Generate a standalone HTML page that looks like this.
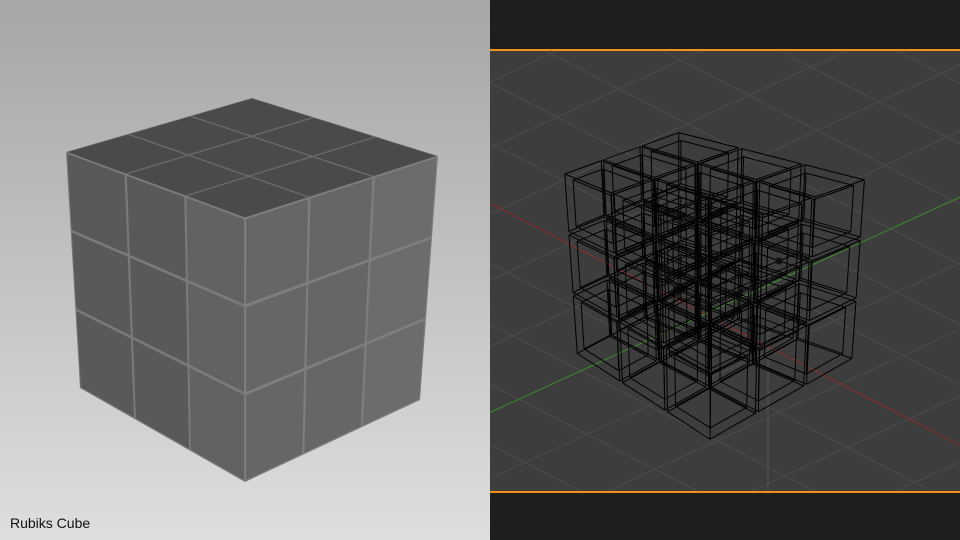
<!DOCTYPE html>
<html><head><meta charset="utf-8"><style>
html,body{margin:0;padding:0;width:960px;height:540px;overflow:hidden;background:#1e1e1e}
#l{position:absolute;left:0;top:0;width:490px;height:540px;overflow:hidden;background:linear-gradient(#a6a6a6,#dedede)}
#r{position:absolute;left:490px;top:0;width:470px;height:540px;overflow:hidden;background:#1e1e1e}
#vp{position:absolute;left:0;top:49px;width:470px;height:444px;background:#3d3d3d}
#ot{position:absolute;left:0;top:49px;width:470px;height:2px;background:#f0901e;z-index:3}
#ob{position:absolute;left:0;top:491px;width:470px;height:2px;background:#f0901e;z-index:3}
#txt{position:absolute;left:10px;top:515px;font:14px "Liberation Sans",sans-serif;color:#111;line-height:16px}
svg{position:absolute;left:0;top:0}
</style></head><body>
<div id="l"><svg id="sl" width="490" height="540"></svg><div id="txt">Rubiks Cube</div></div>
<div id="r"><div id="vp"></div><svg id="sr" width="470" height="540"><defs><clipPath id="cp"><rect x="0" y="51" width="470" height="440"/></clipPath></defs><g id="gr" clip-path="url(#cp)"></g></svg><div id="ot"></div><div id="ob"></div></div>
<script>
function tri(c,u,v,w){
 function bl(a,b,cc,d){return [a[0]*(1-u)*(1-v)+b[0]*u*(1-v)+cc[0]*(1-u)*v+d[0]*u*v, a[1]*(1-u)*(1-v)+b[1]*u*(1-v)+cc[1]*(1-u)*v+d[1]*u*v];}
 var t=bl(c[0],c[1],c[2],c[3]),b=bl(c[4],c[5],c[6],c[7]);return [t[0]*(1-w)+b[0]*w,t[1]*(1-w)+b[1]*w];}
var NS='http://www.w3.org/2000/svg';
function poly(s,pts,fill){var p=document.createElementNS(NS,'polygon');p.setAttribute('points',pts.map(function(q){return q[0].toFixed(1)+','+q[1].toFixed(1)}).join(' '));p.setAttribute('fill',fill);s.appendChild(p);}
function line(s,a,b,col,sw){var p=document.createElementNS(NS,'line');p.setAttribute('x1',a[0]);p.setAttribute('y1',a[1]);p.setAttribute('x2',b[0]);p.setAttribute('y2',b[1]);p.setAttribute('stroke',col);p.setAttribute('stroke-width',sw||1);s.appendChild(p);}
var sl=document.getElementById('sl');
var C=[[252,98],[438,156],[66,152],[245,218],[252,330],[420,400],[80,388],[245,482]];
var g=0.006;
poly(sl,[C[0],C[1],C[3],C[2]],'#6a6a6a');
poly(sl,[C[2],C[3],C[7],C[6]],'#7a7a7a');
poly(sl,[C[3],C[1],C[5],C[7]],'#7e7e7e');
for(var i=0;i<3;i++)for(var j=0;j<3;j++){
 var a=i/3+g,b=(i+1)/3-g,c=j/3+g,d=(j+1)/3-g;
 poly(sl,[tri(C,a,c,0),tri(C,b,c,0),tri(C,b,d,0),tri(C,a,d,0)],'#4a4a4a');
 poly(sl,[tri(C,a,1,c),tri(C,b,1,c),tri(C,b,1,d),tri(C,a,1,d)],i==2?'#626262':'#595959');
 poly(sl,[tri(C,1,a,c),tri(C,1,b,c),tri(C,1,b,d),tri(C,1,a,d)],a<0.1?'#6c6c6c':'#666666');
}
var sr=document.getElementById('gr');
var O=[215,314],rd=[68,35],gd=[-62,28.4];
for(var k=-12;k<=12;k++){
 var o1=[O[0]+gd[0]*k,O[1]+gd[1]*k];line(sr,[o1[0]-rd[0]*12,o1[1]-rd[1]*12],[o1[0]+rd[0]*12,o1[1]+rd[1]*12],'#4c4c4c');
 var o2=[O[0]+rd[0]*k,O[1]+rd[1]*k];line(sr,[o2[0]-gd[0]*12,o2[1]-gd[1]*12],[o2[0]+gd[0]*12,o2[1]+gd[1]*12],'#4c4c4c');
}
line(sr,[O[0]-rd[0]*12,O[1]-rd[1]*12],[O[0]+rd[0]*12,O[1]+rd[1]*12],'#8a2a2a');
line(sr,[O[0]-gd[0]*12,O[1]-gd[1]*12],[O[0]+gd[0]*12,O[1]+gd[1]*12],'#3c8a2a');
line(sr,[278,330],[278,492],'#555');
var W=[[188,130],[378,178],[72,172],[220,232],[188,300],[365,360],[85,355],[220,443]];
function box(c,u0,u1,v0,v1,w0,w1){
 var P=[];[w0,w1].forEach(function(w){P.push(tri(c,u0,v0,w),tri(c,u1,v0,w),tri(c,u1,v1,w),tri(c,u0,v1,w));});
 var E=[[0,1],[1,2],[2,3],[3,0],[4,5],[5,6],[6,7],[7,4],[0,4],[1,5],[2,6],[3,7]];
 E.forEach(function(e){line(sr,P[e[0]],P[e[1]],'#000',1);});
}
for(var i=0;i<3;i++)for(var j=0;j<3;j++)for(var k=0;k<3;k++){
 box(W,i/3+0.01,(i+1)/3-0.01,j/3+0.01,(j+1)/3-0.01,k/3+0.01,(k+1)/3-0.01);
 box(W,i/3+0.04,(i+1)/3-0.04,j/3+0.04,(j+1)/3-0.04,k/3+0.04,(k+1)/3-0.04);
}
var cc=document.createElementNS(NS,'circle');cc.setAttribute('cx',289);cc.setAttribute('cy',261);cc.setAttribute('r',3.5);cc.setAttribute('fill','#111');sr.appendChild(cc);
</script>
</body></html>
